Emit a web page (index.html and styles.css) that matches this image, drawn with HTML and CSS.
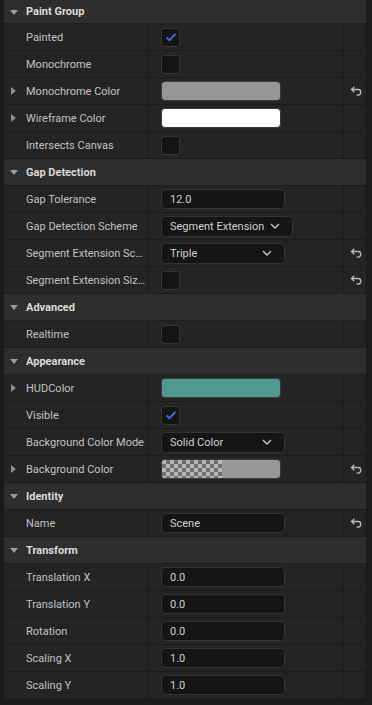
FILE: index.html
```html
<!DOCTYPE html>
<html lang="en">
    <head>
        <meta charset="UTF-8">
        <title>Details</title>
        <link rel="stylesheet" href="styles.css">
    </head>
    <body>
        <div class="panel">
            <div class="list">
                <div class="header first"><span class="caret-down"></span>Paint Group</div>
                <div class="row">
                    <div class="name">Painted</div>
                    <div class="value"><span class="check on"><svg width="12" height="10" viewBox="0 0 12 10"><path d="M1.5 5.5 L4.5 8.2 L10.5 1.8" fill="none" stroke="#3f6fe6" stroke-width="1.8"/></svg></span></div>
                    <div class="reset"></div>
                </div>
                <div class="row">
                    <div class="name">Monochrome</div>
                    <div class="value"><span class="check"></span></div>
                    <div class="reset"></div>
                </div>
                <div class="row">
                    <div class="name"><span class="caret-right"></span>Monochrome Color</div>
                    <div class="value"><span class="swatch gray"></span></div>
                    <div class="reset"><svg class="undo" width="12" height="10" viewBox="0 0 12 10"><path d="M1.5 3.5 H8 a2.8 2.8 0 0 1 0 5.6 H6.5 M4.3 0.8 L1.5 3.5 L4.3 6.2" fill="none" stroke="#b8b8b8" stroke-width="1.3"/></svg></div>
                </div>
                <div class="row">
                    <div class="name"><span class="caret-right"></span>Wireframe Color</div>
                    <div class="value"><span class="swatch white"></span></div>
                    <div class="reset"></div>
                </div>
                <div class="row">
                    <div class="name">Intersects Canvas</div>
                    <div class="value"><span class="check"></span></div>
                    <div class="reset"></div>
                </div>

                <div class="header"><span class="caret-down"></span>Gap Detection</div>
                <div class="row">
                    <div class="name">Gap Tolerance</div>
                    <div class="value"><span class="field">12.0</span></div>
                    <div class="reset"></div>
                </div>
                <div class="row">
                    <div class="name">Gap Detection Scheme</div>
                    <div class="value"><span class="combo">Segment Extension<svg width="10" height="6" viewBox="0 0 10 6"><path d="M1 1 L5 5 L9 1" fill="none" stroke="#c8c8c8" stroke-width="1.4"/></svg></span></div>
                    <div class="reset"></div>
                </div>
                <div class="row">
                    <div class="name">Segment Extension Scheme</div>
                    <div class="value"><span class="combo wide">Triple<svg width="10" height="6" viewBox="0 0 10 6"><path d="M1 1 L5 5 L9 1" fill="none" stroke="#c8c8c8" stroke-width="1.4"/></svg></span></div>
                    <div class="reset"><svg class="undo" width="12" height="10" viewBox="0 0 12 10"><path d="M1.5 3.5 H8 a2.8 2.8 0 0 1 0 5.6 H6.5 M4.3 0.8 L1.5 3.5 L4.3 6.2" fill="none" stroke="#b8b8b8" stroke-width="1.3"/></svg></div>
                </div>
                <div class="row">
                    <div class="name">Segment Extension Size Factor</div>
                    <div class="value"><span class="check"></span></div>
                    <div class="reset"><svg class="undo" width="12" height="10" viewBox="0 0 12 10"><path d="M1.5 3.5 H8 a2.8 2.8 0 0 1 0 5.6 H6.5 M4.3 0.8 L1.5 3.5 L4.3 6.2" fill="none" stroke="#b8b8b8" stroke-width="1.3"/></svg></div>
                </div>

                <div class="header"><span class="caret-down"></span>Advanced</div>
                <div class="row">
                    <div class="name">Realtime</div>
                    <div class="value"><span class="check"></span></div>
                    <div class="reset"></div>
                </div>

                <div class="header"><span class="caret-down"></span>Appearance</div>
                <div class="row">
                    <div class="name"><span class="caret-right"></span>HUDColor</div>
                    <div class="value"><span class="swatch teal"></span></div>
                    <div class="reset"></div>
                </div>
                <div class="row">
                    <div class="name">Visible</div>
                    <div class="value"><span class="check on"><svg width="12" height="10" viewBox="0 0 12 10"><path d="M1.5 5.5 L4.5 8.2 L10.5 1.8" fill="none" stroke="#3f6fe6" stroke-width="1.8"/></svg></span></div>
                    <div class="reset"></div>
                </div>
                <div class="row">
                    <div class="name">Background Color Mode</div>
                    <div class="value"><span class="combo wide">Solid Color<svg width="10" height="6" viewBox="0 0 10 6"><path d="M1 1 L5 5 L9 1" fill="none" stroke="#c8c8c8" stroke-width="1.4"/></svg></span></div>
                    <div class="reset"></div>
                </div>
                <div class="row">
                    <div class="name"><span class="caret-right"></span>Background Color</div>
                    <div class="value"><span class="swatch alpha"><span class="checker"></span></span></div>
                    <div class="reset"><svg class="undo" width="12" height="10" viewBox="0 0 12 10"><path d="M1.5 3.5 H8 a2.8 2.8 0 0 1 0 5.6 H6.5 M4.3 0.8 L1.5 3.5 L4.3 6.2" fill="none" stroke="#b8b8b8" stroke-width="1.3"/></svg></div>
                </div>

                <div class="header"><span class="caret-down"></span>Identity</div>
                <div class="row">
                    <div class="name">Name</div>
                    <div class="value"><span class="field">Scene</span></div>
                    <div class="reset"><svg class="undo" width="12" height="10" viewBox="0 0 12 10"><path d="M1.5 3.5 H8 a2.8 2.8 0 0 1 0 5.6 H6.5 M4.3 0.8 L1.5 3.5 L4.3 6.2" fill="none" stroke="#b8b8b8" stroke-width="1.3"/></svg></div>
                </div>

                <div class="header"><span class="caret-down"></span>Transform</div>
                <div class="row">
                    <div class="name">Translation X</div>
                    <div class="value"><span class="field">0.0</span></div>
                    <div class="reset"></div>
                </div>
                <div class="row">
                    <div class="name">Translation Y</div>
                    <div class="value"><span class="field">0.0</span></div>
                    <div class="reset"></div>
                </div>
                <div class="row">
                    <div class="name">Rotation</div>
                    <div class="value"><span class="field">0.0</span></div>
                    <div class="reset"></div>
                </div>
                <div class="row">
                    <div class="name">Scaling X</div>
                    <div class="value"><span class="field">1.0</span></div>
                    <div class="reset"></div>
                </div>
                <div class="row">
                    <div class="name">Scaling Y</div>
                    <div class="value"><span class="field">1.0</span></div>
                    <div class="reset"></div>
                </div>
            </div>
        </div>
    </body>
</html>
```

FILE: styles.css
```css
* {
    box-sizing: border-box;
    font-family: Roboto, "Liberation Sans", sans-serif;
}

html, body {
    margin: 0;
    background: #1b1b1b;
}

.panel {
    width: 372px;
    height: 705px;
    padding: 0 6px 0 4px;
    background: #1b1b1b;
}

.list {
    display: flex;
    flex-direction: column;
}

.header {
    display: flex;
    align-items: center;
    height: 27px;
    padding-left: 22px;
    position: relative;
    background: #2e2e2e;
    border-bottom: 1px solid #1e1e1e;
    color: #dadada;
    font-size: 11px;
    font-weight: bold;
}

.header.first {
    height: 24px;
}

.caret-down {
    position: absolute;
    left: 6px;
    top: 50%;
    margin-top: -2px;
    border-left: 4px solid transparent;
    border-right: 4px solid transparent;
    border-top: 5px solid #9c9c9c;
}

.row {
    display: flex;
    height: 27px;
    background: #242424;
    border-bottom: 1px solid #1c1c1c;
}

.name {
    position: relative;
    width: 145px;
    padding: 0 2px 0 22px;
    border-right: 1px solid #1c1c1c;
    color: #c2c2c2;
    font-size: 11px;
    line-height: 27px;
    white-space: nowrap;
    overflow: hidden;
    text-overflow: ellipsis;
}

.caret-right {
    position: absolute;
    left: 7px;
    top: 9px;
    border-top: 4px solid transparent;
    border-bottom: 4px solid transparent;
    border-left: 5px solid #8e8e8e;
}

.value {
    display: flex;
    align-items: center;
    width: 195px;
    padding-left: 12px;
    border-right: 1px solid #1c1c1c;
}

.reset {
    display: flex;
    align-items: center;
    justify-content: center;
    width: 22px;
    padding-left: 1px;
}

.check {
    display: flex;
    align-items: center;
    justify-content: center;
    width: 19px;
    height: 19px;
    background: #141414;
    border: 1px solid #353535;
    border-radius: 3px;
}

.swatch {
    display: flex;
    width: 120px;
    height: 20px;
    border-radius: 4px;
    border: 1px solid #3a3a3a;
    overflow: hidden;
}

.swatch.gray {
    background: #979797;
}

.swatch.white {
    background: #ffffff;
}

.swatch.teal {
    background: #4f9990;
}

.swatch.alpha {
    background: #999999;
}

.checker {
    width: 60px;
    height: 100%;
    background-color: #b6b6b6;
    background-image:
        linear-gradient(45deg, #707070 25%, transparent 25%, transparent 75%, #707070 75%),
        linear-gradient(45deg, #707070 25%, transparent 25%, transparent 75%, #707070 75%);
    background-size: 8px 8px;
    background-position: 0 0, 4px 4px;
}

.field {
    display: flex;
    align-items: center;
    width: 124px;
    height: 20px;
    padding-left: 8px;
    background: #151515;
    border: 1px solid #333333;
    border-radius: 4px;
    color: #d0d0d0;
    font-size: 11px;
}

.combo {
    display: flex;
    align-items: center;
    justify-content: space-between;
    gap: 6px;
    height: 21px;
    padding: 0 12px 0 8px;
    background: #151515;
    border: 1px solid #333333;
    border-radius: 4px;
    color: #d0d0d0;
    font-size: 11px;
}

.combo.wide {
    width: 124px;
}
```
